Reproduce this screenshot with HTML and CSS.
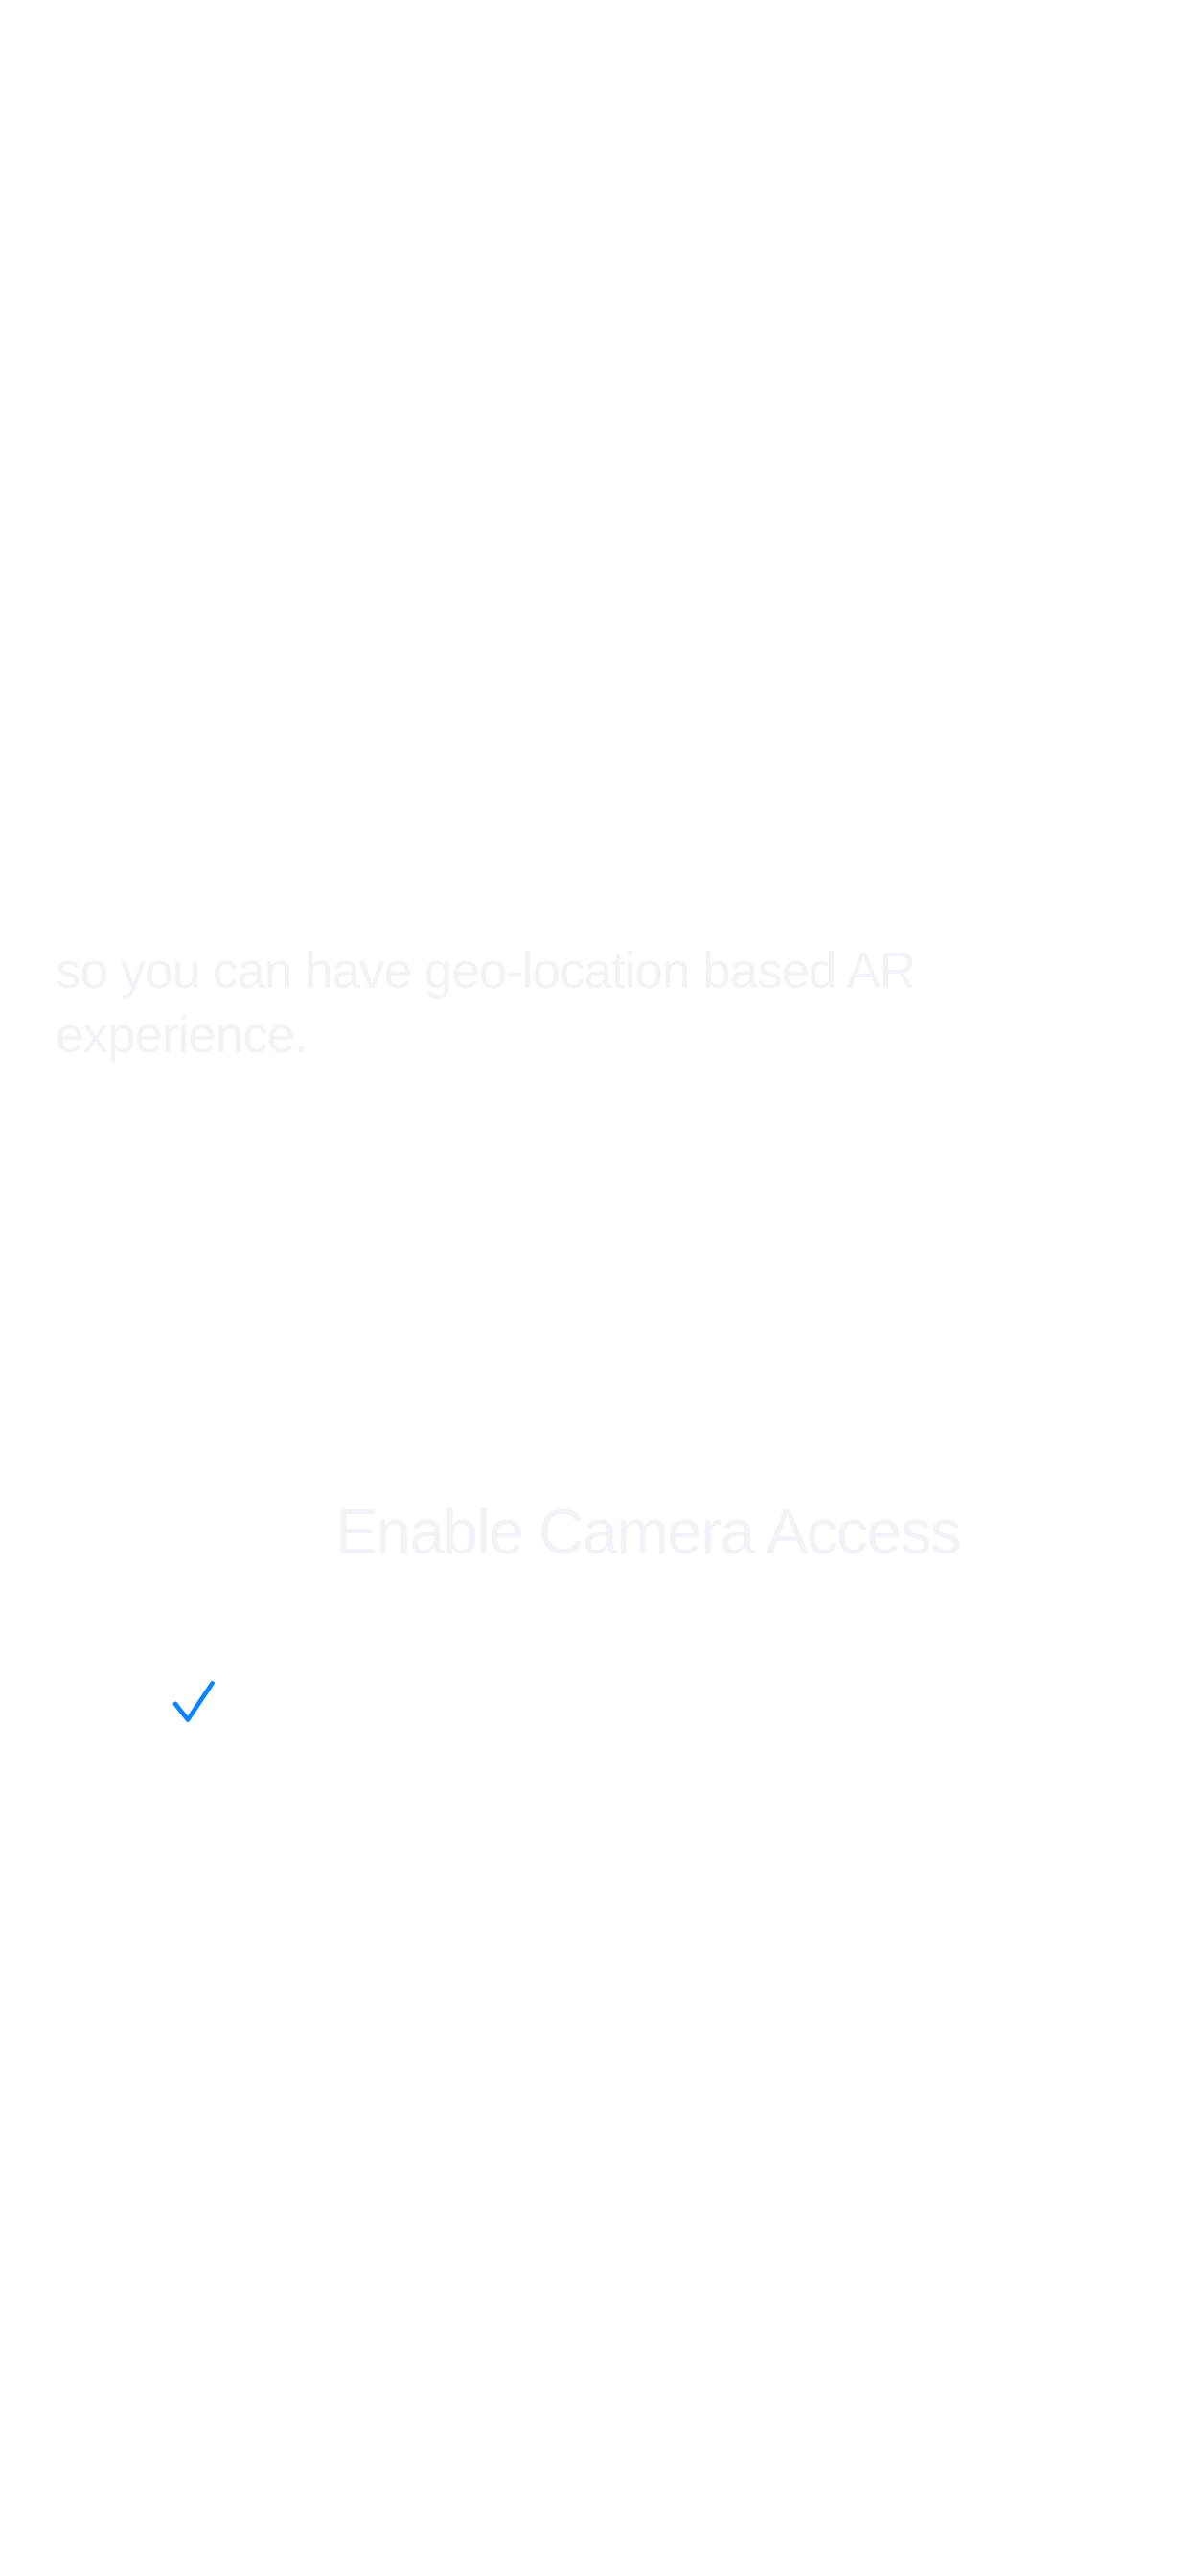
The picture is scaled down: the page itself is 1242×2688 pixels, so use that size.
FILE: index.html
```html
<!DOCTYPE html>
<html lang="en">
<head>
<meta charset="utf-8">
<title>Enable Camera Access</title>
<link rel="stylesheet" href="styles.css">
</head>
<body>
<main class="screen">
  <p class="description">so you can have geo-location based AR experience.</p>
  <div class="action-row">
    <span class="action-label">Enable Camera Access</span>
  </div>
  <div class="check-row">
    <svg class="check" width="60" height="60" viewBox="0 0 60 60" aria-hidden="true">
      <path d="M13 38 L26 54.5 L51.5 16.5" fill="none" stroke="#0a84ff" stroke-width="4.7" stroke-linecap="round" stroke-linejoin="round"/>
    </svg>
  </div>
</main>
</body>
</html>
```
FILE: styles.css
```css
html, body {
  margin: 0;
  padding: 0;
  background: #ffffff;
}

.screen {
  width: 1242px;
  min-height: 2688px;
  display: flex;
  flex-direction: column;
  font-family: "Liberation Sans", Arial, sans-serif;
  color: #f2f2f7;
}

.description {
  margin: 979px 0 0 0;
  padding: 0 200px 0 58px;
  font-size: 53px;
  line-height: 67px;
  letter-spacing: -1px;
}

.action-row {
  margin-top: 445px;
  padding-left: 350px;
  display: flex;
}

.action-label {
  font-size: 66px;
  line-height: 80px;
  letter-spacing: -1.7px;
  white-space: nowrap;
}

.check-row {
  margin-top: 102px;
  padding-left: 170px;
  display: flex;
}

.check {
  display: block;
}
```
